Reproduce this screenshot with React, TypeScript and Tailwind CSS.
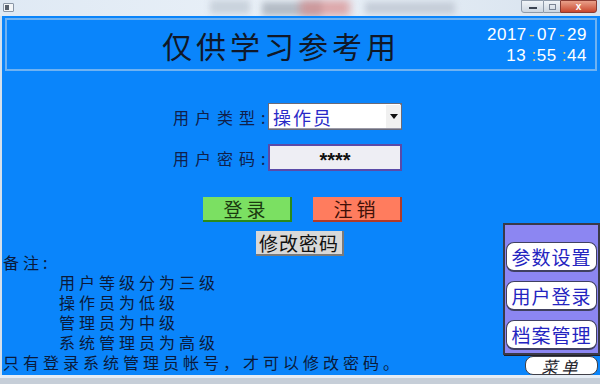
import React from 'react';

const cjk = { fontFamily: '"Noto Sans CJK SC", "Noto Sans", sans-serif' };
const latin = { fontFamily: '"Liberation Sans", Arial, sans-serif' };

const notes = ['用户等级分为三级', '操作员为低级', '管理员为中级', '系统管理员为高级'];
const menuItems = ['参数设置', '用户登录', '档案管理'];

function TitleBar() {
  return (
    <div className="relative h-[16px] w-full overflow-hidden bg-gradient-to-r from-[#dfe9f4] via-[#eaf1f8] to-[#d7e2ee]">
      <div className="absolute left-[3px] top-[3px] h-[9px] w-[11px] rounded-[1px] border border-[#8a96a6] bg-[#f4f6f8]">
        <div className="m-[1px] h-[5px] w-[4px] bg-[#58606c]" />
      </div>
      <div className="absolute left-[210px] top-0 h-[14px] w-[40px] bg-[#c9d2dc] blur-[3px]" />
      <div className="absolute left-[262px] top-[2px] h-[14px] w-[60px] bg-[#b4bcc6] blur-[3px]" />
      <div className="absolute left-[300px] top-0 h-[16px] w-[50px] bg-[#d88888] blur-[4px] opacity-70" />
      <div className="absolute left-[365px] top-[2px] h-[12px] w-[90px] bg-[#c5cdd8] blur-[3px]" />
      <div className="absolute right-[3px] top-0 flex h-[13px]">
        <div className="flex w-[23px] items-center justify-center rounded-bl-[3px] border border-[#8e99a8] bg-gradient-to-b from-[#f0f4f8] to-[#cdd6e0]">
          <div className="mt-[3px] h-[2px] w-[8px] bg-[#3c4452]" />
        </div>
        <div className="flex w-[16px] items-center justify-center border-y border-[#8e99a8] bg-gradient-to-b from-[#f0f4f8] to-[#cdd6e0]">
          <div className="h-[6px] w-[7px] border border-[#7a8494]" />
        </div>
        <div className="flex w-[37px] items-center justify-center rounded-br-[3px] border border-[#8a3a30] bg-gradient-to-b from-[#e8a08a] to-[#c8452c] text-[10px] font-bold leading-none text-white" style={latin}>
          x
        </div>
      </div>
    </div>
  );
}

function Header() {
  return (
    <div className="mx-[3px] mt-[2px] flex h-[53px] items-center border-2 border-[#6fb2f2]">
      <div className="flex flex-1 justify-center pl-[72px]">
        <span className="text-[30px] leading-none tracking-[4px] text-[#101828]" style={cjk}>
          仅供学习参考用
        </span>
      </div>
      <div className="mr-[8px] flex w-[104px] flex-col items-end text-[17px] leading-[21px] tracking-[0.5px] text-white" style={latin}>
        <span>
          2017<span className="px-[2px] text-[#e8d070]">-</span>07<span className="px-[2px] text-[#e8d070]">-</span>29
        </span>
        <span>
          13 <span className="text-[#e8d070]">:</span>55 <span className="text-[#e8d070]">:</span>44
        </span>
      </div>
    </div>
  );
}

function Form() {
  return (
    <div className="mt-[32px] flex flex-col">
      <div className="ml-[171px] flex items-center">
        <span className="w-[95px] whitespace-nowrap text-[16px] tracking-[6px] text-[#10204a]" style={cjk}>
          用户类型:
        </span>
        <div className="flex h-[27px] w-[134px] items-center justify-between border border-[#6a6a78] bg-white pl-[4px] shadow-[inset_-1px_-1px_0_#9a9aa8]">
          <span className="text-[18px] leading-none tracking-[2px] text-[#2a2ac8]" style={cjk}>
            操作员
          </span>
          <div className="flex h-[23px] w-[15px] items-center justify-center bg-[#f0f0f0]">
            <svg width="8" height="5" viewBox="0 0 8 5">
              <path d="M0 0h8L4 5z" fill="#101010" />
            </svg>
          </div>
        </div>
      </div>
      <div className="ml-[171px] mt-[14px] flex items-center">
        <span className="w-[95px] whitespace-nowrap text-[16px] tracking-[6px] text-[#10204a]" style={cjk}>
          用户密码:
        </span>
        <div className="flex h-[27px] w-[134px] items-center justify-center border-2 border-[#5a4aa8] bg-[#eeeef4] pt-[4px] text-[20px] font-bold leading-none text-[#101010]" style={latin}>
          ****
        </div>
      </div>
      <div className="ml-[201px] mt-[26px] flex gap-[21px]">
        <button className="flex h-[25px] w-[89px] items-center justify-center border-b-2 border-r-2 border-[#2a8a1a] bg-[#7be062] text-[19px] leading-none tracking-[4px] text-[#1a3a10]" style={cjk}>
          登录
        </button>
        <button className="flex h-[25px] w-[89px] items-center justify-center border-b-2 border-r-2 border-[#b03a28] bg-[#ff7c5e] text-[19px] leading-none tracking-[4px] text-[#401008]" style={cjk}>
          注销
        </button>
      </div>
      <div className="ml-[254px] mt-[9px]">
        <button className="flex h-[25px] w-[88px] items-center justify-center border-b-2 border-r-2 border-[#7a7a7a] bg-[#d8d8d8] text-[19px] leading-none tracking-[1px] text-[#101010]" style={cjk}>
          修改密码
        </button>
      </div>
    </div>
  );
}

function Notes() {
  return (
    <div className="-mt-[4px] flex flex-col pl-[1px] text-[16px] tracking-[4px] text-[#0a1a3a]" style={cjk}>
      <span className="h-[20px] leading-[20px]">备注:</span>
      {notes.map((n) => (
        <span key={n} className="h-[20px] pl-[56px] leading-[20px]">
          {n}
        </span>
      ))}
      <span className="h-[20px] leading-[20px]">只有登录系统管理员帐号，才可以修改密码。</span>
    </div>
  );
}

function Menu() {
  return (
    <div className="absolute right-0 top-[207px] flex flex-col items-end">
      <div className="flex h-[132px] w-[97px] flex-col gap-[9px] border-2 border-[#3a3a48] bg-[#8c86f2] px-[1px] pt-[17px] shadow-[1px_1px_0_#20202a]">
        {menuItems.map((m) => (
          <div key={m} className="flex h-[30px] items-center justify-center rounded-[8px] border border-[#404060] border-b-2 bg-white text-[19px] leading-none tracking-[1px] text-[#2424c0]" style={cjk}>
            {m}
          </div>
        ))}
      </div>
      <div className="mr-[2px] mt-[1px] flex h-[19px] w-[73px] items-center justify-center rounded-[8px] border border-[#404048] bg-white text-[16px] italic leading-none tracking-[4px] text-[#202028]" style={cjk}>
        菜单
      </div>
    </div>
  );
}

export default function App() {
  return (
    <div className="flex h-[384px] w-[600px] flex-col overflow-hidden bg-[#dfe9f4]">
      <TitleBar />
      <div className="relative flex h-[359px] flex-col border-l-2 border-[#d4e0ec] bg-[#0a85fb]">
        <Header />
        <Form />
        <Notes />
        <Menu />
      </div>
      <div className="h-[9px] border-t-[3px] border-[#e6edf5] bg-[#c6ced8]" />
    </div>
  );
}
